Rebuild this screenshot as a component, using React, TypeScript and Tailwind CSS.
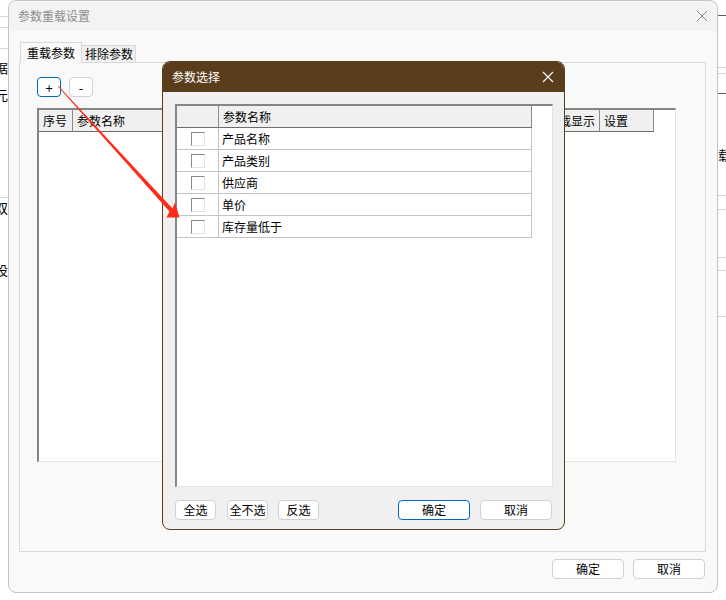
import React from 'react';

const rows = ['产品名称', '产品类别', '供应商', '单价', '库存量低于'];

function Btn({ label, width, primary }: { label: string; width: string; primary?: boolean }) {
  return (
    <button
      className={`h-[20px] ${width} shrink-0 rounded-[4px] border bg-white text-[12px] leading-none text-black ${
        primary ? 'border-[#0067c0]' : 'border-[#d0d0d0]'
      }`}
    >
      {label}
    </button>
  );
}

function Check() {
  return <div className="h-[14px] w-[14px] border-t border-l border-b border-r border-t-[#8a8a8a] border-l-[#8a8a8a] border-b-[#e3e3e3] border-r-[#e3e3e3] bg-white" />;
}

function Line({ mt, dark }: { mt: string; dark?: boolean }) {
  return <div className={`h-px w-full ${mt} ${dark ? 'bg-[#5c5c5c]' : 'bg-[#d6d6d6]'}`} />;
}

function Frag({ mt, ch, left }: { mt: string; ch: string; left?: boolean }) {
  return (
    <div className={`h-[14px] overflow-hidden ${mt}`}>
      <span className={`block whitespace-nowrap text-[13px] leading-[14px] text-black ${left ? '' : '-ml-[5px]'}`}>{ch}</span>
    </div>
  );
}

// header of the table behind the modal; the middle columns are covered
const mainCols = [
  ['序号', 'w-[34px]'],
  ['参数名称', 'w-[140px]'],
  ['', 'w-[100px]'],
  ['', 'w-[100px]'],
  ['', 'w-[80px]'],
  ['', 'w-[50px]'],
  ['重载显示', 'w-[57px]'],
  ['设置', 'w-[54px]'],
];

export default function App() {
  return (
    <div className="relative flex h-[600px] w-[726px] overflow-hidden bg-white font-['Noto_Sans_CJK_SC','Microsoft_YaHei',sans-serif] text-[12px] text-black">
      {/* background app, left edge */}
      <div className="flex w-[8px] shrink-0 flex-col">
        <Line mt="mt-[16px]" />
        <Line mt="mt-[10px]" />
        <Line mt="mt-[20px]" />
        <Frag mt="mt-[12px]" ch="据" />
        <Frag mt="mt-[13px]" ch="元" />
        <Line mt="mt-[95px]" />
        <Frag mt="mt-[3px]" ch="双" />
        <Frag mt="mt-[48px]" ch="设" />
      </div>

      {/* main dialog */}
      <div className="flex h-[593px] w-[710px] shrink-0 flex-col rounded-[8px] border border-[#c4c4c4] bg-[#f9f9f9]">
        <div className="flex h-[30px] items-center justify-between rounded-t-[8px] bg-[#f3f3f3] pl-[9px] pr-[9px]">
          <span className="text-[12px] text-[#8c8c8c]">参数重载设置</span>
          <svg width="12" height="12" viewBox="0 0 12 12">
            <path d="M1 1L11 11M11 1L1 11" stroke="#8a8a8a" strokeWidth="1" />
          </svg>
        </div>

        <div className="flex flex-1 flex-col pl-[10px] pr-[11px] pt-[11px]">
          {/* tabs */}
          <div className="ml-[1px] flex h-[20px] items-end">
            <div className="relative z-10 -mb-px h-[21px] w-[62px] border border-b-0 border-[#d9d9d9] bg-[#f9f9f9] pl-[6px] text-[12px] leading-[19px]">
              重载参数
            </div>
            <div className="h-[17px] w-[54px] border border-b-0 border-l-0 border-[#d9d9d9] bg-[#f0f0f0] pl-[3px] text-[12px] leading-[16px]">
              排除参数
            </div>
          </div>

          <div className="flex h-[490px] flex-col border border-[#d9d9d9] pl-[17px] pt-[14px]">
            <div className="flex gap-[8px]">
              <button className="h-[20px] w-[24px] rounded-[4px] border border-[#0067c0] bg-white text-[13px] leading-none">+</button>
              <button className="h-[20px] w-[24px] rounded-[4px] border border-[#d0d0d0] bg-white text-[13px] leading-none">-</button>
            </div>

            <div className="mt-[11px] h-[354px] w-[639px] border-t-2 border-l-2 border-r border-b border-t-[#858585] border-l-[#858585] border-r-[#e3e3e3] border-b-[#e3e3e3] bg-white">
              <div className="flex h-[22px]">
                {mainCols.map(([t, w], i) => (
                  <div key={i} className={`${w} h-[22px] shrink-0 border-r border-b border-r-[#8c8c8c] border-b-[#6e6e6e] bg-[#f0f0f0] pl-[4px] text-[12px] leading-[21px]`}>
                    {t}
                  </div>
                ))}
              </div>
            </div>
          </div>

          <div className="mr-[1px] mt-[7px] flex justify-end gap-[9px]">
            <Btn label="确定" width="w-[72px]" />
            <Btn label="取消" width="w-[72px]" />
          </div>
        </div>
      </div>

      {/* background app, right edge */}
      <div className="flex w-[8px] shrink-0 flex-col">
        <Line mt="mt-[15px]" dark />
        <Line mt="mt-[51px]" />
        <Line mt="mt-[5px]" />
        <Line mt="mt-[19px]" dark />
        <Frag mt="mt-[54px]" ch="载" left />
        <Line mt="mt-[33px]" />
        <Line mt="mt-[13px]" />
        <Line mt="mt-[47px]" />
        <Line mt="mt-[12px]" />
        <Line mt="mt-[45px]" />
      </div>

      {/* modal: 参数选择 */}
      <div className="absolute left-[162px] top-[61px] flex h-[469px] w-[403px] flex-col overflow-hidden rounded-[8px] border border-[#5a3e1c] bg-[#f0f0f0]">
        <div className="flex h-[30px] shrink-0 items-center justify-between bg-[#5a3e1c] pl-[9px] pr-[10px]">
          <span className="text-[12px] text-white">参数选择</span>
          <svg width="12" height="12" viewBox="0 0 12 12">
            <path d="M1 1L11 11M11 1L1 11" stroke="#ffffff" strokeWidth="1.1" />
          </svg>
        </div>

        <div className="flex flex-1 flex-col px-[12px] pt-[12px]">
          <div className="h-[383px] w-[378px] border-t-2 border-l-2 border-r border-b border-t-[#858585] border-l-[#858585] border-r-[#e3e3e3] border-b-[#e3e3e3] bg-white">
            <div className="flex h-[22px]">
              <div className="h-[22px] w-[42px] border-r border-b border-r-[#8c8c8c] border-b-[#6e6e6e] bg-[#f0f0f0]" />
              <div className="h-[22px] w-[313px] border-r border-b border-r-[#8c8c8c] border-b-[#6e6e6e] bg-[#f0f0f0] pl-[4px] leading-[21px]">
                参数名称
              </div>
            </div>
            {rows.map((r) => (
              <div key={r} className="flex h-[22px]">
                <div className="flex h-[22px] w-[42px] items-center justify-center border-r border-b border-[#c4c4c4]">
                  <Check />
                </div>
                <div className="h-[22px] w-[313px] border-r border-b border-[#c4c4c4] pl-[3px] leading-[21px]">{r}</div>
              </div>
            ))}
          </div>

          <div className="mt-[13px] flex items-center">
            <Btn label="全选" width="w-[41px]" />
            <div className="ml-[11px]">
              <Btn label="全不选" width="w-[41px]" />
            </div>
            <div className="ml-[10px]">
              <Btn label="反选" width="w-[41px]" />
            </div>
            <div className="ml-auto flex gap-[10px]">
              <Btn label="确定" width="w-[72px]" primary />
              <Btn label="取消" width="w-[72px]" />
            </div>
          </div>
        </div>
      </div>

      {/* red annotation arrow */}
      <svg className="pointer-events-none absolute left-0 top-0" width="726" height="600" viewBox="0 0 726 600">
        <polygon
          points="57.7,86.3 169.5,211.4 166.5,217.5 179.5,217.5 175,202.5 172.5,208.6 58.3,85.7"
          fill="#ff2a1a"
        />
      </svg>
    </div>
  );
}
